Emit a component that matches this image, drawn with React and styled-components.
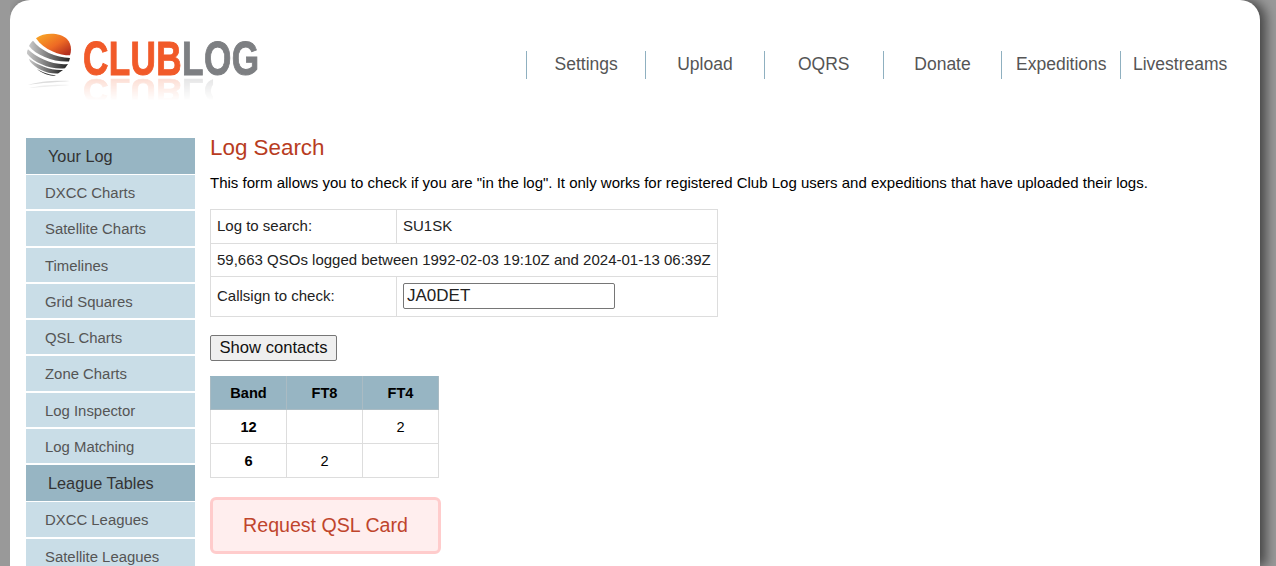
import React from "react";
import styled, { createGlobalStyle } from "styled-components";

const GlobalStyle = createGlobalStyle`
  html, body {
    margin: 0;
    padding: 0;
    height: 566px;
    overflow: hidden;
    background: #999999;
    font-family: "Liberation Sans", Arial, sans-serif;
  }
`;

const Page = styled.div`
  width: 1250px;
  height: 566px;
  margin-left: 10px;
  background: #fff;
  border-radius: 20px 20px 0 0;
  box-shadow: 6px 0 12px rgba(0, 0, 0, 0.55);
  overflow: hidden;
  clip-path: inset(0 -30px 0 0);
`;

const Header = styled.header`
  height: 138px;
  display: flex;
  justify-content: space-between;
  align-items: flex-start;
  padding: 0 21px 0 16px;
`;

const LogoBox = styled.div`
  display: flex;
  align-items: flex-start;
  margin-top: 33px;
  height: 70px;
`;

const LogoWords = styled.div`
  margin-left: 11px;
  margin-top: 9px;
  width: 176px;
  height: 60px;
`;

const LogoText = styled.div`
  font-weight: 700;
  font-size: 47.5px;
  line-height: 34px;
  height: 34px;
  letter-spacing: 0.5px;
  white-space: nowrap;
  -webkit-text-stroke: 1px currentColor;
  transform-origin: 0 50%;
  transform: scale(0.74, 1);
`;

const LogoMirror = styled(LogoText)`
  transform: scale(0.74, -0.7);
  opacity: 0.18;
  margin-top: -3px;
  -webkit-mask-image: linear-gradient(to top, #000 10%, transparent 95%);
  mask-image: linear-gradient(to top, #000 10%, transparent 95%);
`;

const Orange = styled.span`
  color: #f15a29;
`;

const Grey = styled.span`
  color: #7d7f82;
`;

const Nav = styled.nav`
  display: flex;
  margin-top: 51px;
`;

const NavItem = styled.a`
  width: 118.8px;
  height: 28px;
  padding-bottom: 2px;
  box-sizing: border-box;
  border-left: 1px solid #8fb0c0;
  display: flex;
  align-items: center;
  justify-content: center;
  font-size: 17.5px;
  color: #555;
`;

const Body = styled.div`
  display: flex;
  padding: 0 16px;
  gap: 15px;
`;

const Sidebar = styled.aside`
  width: 169px;
  flex: none;
`;

const SideHead = styled.div`
  height: 36px;
  line-height: 36px;
  margin-bottom: 1px;
  padding-left: 22px;
  background: #97b5c3;
  color: #333;
  font-size: 16.3px;
`;

const SideItem = styled.a`
  display: block;
  height: 34.3px;
  line-height: 36px;
  margin-bottom: 2px;
  padding-left: 19px;
  background: #c9dde7;
  color: #555;
  font-size: 14.9px;
`;

const Main = styled.main`
  flex: 1;
  color: #000;
`;

const Title = styled.h1`
  margin: 0;
  font-size: 22.4px;
  line-height: 20px;
  font-weight: 400;
  color: #b83c1e;
`;

const Intro = styled.p`
  margin: 16px 0 17px;
  font-size: 15px;
  line-height: 18px;
`;

const InfoTable = styled.table`
  border-collapse: collapse;
  width: 508px;
  font-size: 15px;
  color: #222;

  td {
    border: 1px solid #ddd;
    padding: 0 6px 2px;
    height: 31px;
  }
`;

const LabelCell = styled.td`
  width: 173px;
`;

const WideCell = styled.td`
  && {
    height: 30px;
  }
`;

const CallInput = styled.input`
  width: 212px;
  height: 26px;
  box-sizing: border-box;
  margin: 6px 0 5px;
  display: block;
  padding: 0 4px 0 3px;
  border: 1px solid #767676;
  border-radius: 2px;
  font: 17px "Liberation Sans", sans-serif;
  color: #222;
`;

const ShowButton = styled.button`
  display: block;
  margin: 18px 0 15px;
  width: 127px;
  height: 26px;
  padding: 0;
  background: #efefef;
  border: 1px solid #767676;
  border-radius: 2px;
  font: 16.6px "Liberation Sans", sans-serif;
  color: #111;
`;

const BandTable = styled.table`
  border-collapse: collapse;
  width: 229px;
  table-layout: fixed;
  font-size: 14.6px;
  text-align: center;

  th {
    background: #97b5c3;
    border: 1px solid #aabbc3;
    border-top-color: #97b5c3;
    height: 32px;
    padding: 0;
    font-weight: 700;
  }

  td {
    border: 1px solid #ddd;
    height: 33px;
    padding: 0;
  }
`;

const BandCell = styled.td`
  font-weight: 700;
`;

const QslButton = styled.a`
  display: flex;
  align-items: center;
  justify-content: center;
  box-sizing: border-box;
  width: 231px;
  height: 57px;
  margin-top: 19px;
  background: #ffeeee;
  border: 3px solid #ffcccc;
  border-radius: 6px;
  color: #c0452c;
  font-size: 19.6px;
`;

const navLinks = ["Settings", "Upload", "OQRS", "Donate", "Expeditions", "Livestreams"];

const sideMenu = [
  { head: "Your Log" },
  "DXCC Charts",
  "Satellite Charts",
  "Timelines",
  "Grid Squares",
  "QSL Charts",
  "Zone Charts",
  "Log Inspector",
  "Log Matching",
  { head: "League Tables" },
  "DXCC Leagues",
  "Satellite Leagues",
];

const bands = [
  { band: "12", ft8: "", ft4: "2" },
  { band: "6", ft8: "2", ft4: "" },
];

function Sphere() {
  return (
    <svg width="46" height="58" viewBox="0 0 46 58">
      <defs>
        <linearGradient id="ball" x1="0.1" y1="0.1" x2="0.9" y2="0.9">
          <stop offset="0" stopColor="#f7a126" />
          <stop offset="0.55" stopColor="#ee6a24" />
          <stop offset="1" stopColor="#b5301f" />
        </linearGradient>
        <linearGradient id="band" x1="0" y1="0" x2="1" y2="0">
          <stop offset="0" stopColor="#c9c9c9" />
          <stop offset="0.5" stopColor="#777" />
          <stop offset="1" stopColor="#222" />
        </linearGradient>
      </defs>
      <g transform="scale(1 0.86)">
        <path d="M10 6 C18 -1 34 -1 41 7 C45 12 46 19 44 26 C34 26 18 20 10 6 Z" fill="url(#ball)" />
        <path d="M7 9 C14 20 30 29 44 29 L43 33 C28 34 10 26 3 15 C4 13 5 11 7 9 Z" fill="url(#band)" />
        <path d="M2 19 C10 29 28 38 42 36 L39 41 C26 43 8 35 1 24 C1 22 1 21 2 19 Z" fill="url(#band)" />
        <path d="M3 30 C12 38 26 44 37 43 L32 47 C22 48 9 41 4 33 Z" fill="url(#band)" />
        <path d="M11 42 C18 47 24 49 30 49 C25 51 17 48 11 42 Z" fill="#333" />
      </g>
      <path d="M2 52 C12 48 32 47 44 48 C32 49 14 50 2 52 Z" fill="#ddd" />
      <path d="M3 55 C14 52 32 51 44 52 C32 53 16 54 3 55 Z" fill="#eee" />
    </svg>
  );
}

function Logo() {
  return (
    <LogoBox>
      <Sphere />
      <LogoWords>
        <LogoText><Orange>CLUB</Orange><Grey>LOG</Grey></LogoText>
        <LogoMirror aria-hidden="true"><Orange>CLUB</Orange><Grey>LOG</Grey></LogoMirror>
      </LogoWords>
    </LogoBox>
  );
}

export default function App() {
  return (
    <>
      <GlobalStyle />
      <Page>
        <Header>
          <Logo />
          <Nav>
            {navLinks.map(link => <NavItem key={link}>{link}</NavItem>)}
          </Nav>
        </Header>
        <Body>
          <Sidebar>
            {sideMenu.map(entry =>
              entry.head
                ? <SideHead key={entry.head}>{entry.head}</SideHead>
                : <SideItem key={entry}>{entry}</SideItem>
            )}
          </Sidebar>
          <Main>
            <Title>Log Search</Title>
            <Intro>This form allows you to check if you are "in the log". It only works for registered Club Log users and expeditions that have uploaded their logs.</Intro>
            <InfoTable>
              <tbody>
                <tr><LabelCell>Log to search:</LabelCell><td>SU1SK</td></tr>
                <tr><WideCell colSpan="2">59,663 QSOs logged between 1992-02-03 19:10Z and 2024-01-13 06:39Z</WideCell></tr>
                <tr><LabelCell>Callsign to check:</LabelCell><td><CallInput defaultValue="JA0DET" /></td></tr>
              </tbody>
            </InfoTable>
            <ShowButton>Show contacts</ShowButton>
            <BandTable>
              <thead>
                <tr><th>Band</th><th>FT8</th><th>FT4</th></tr>
              </thead>
              <tbody>
                {bands.map(row => (
                  <tr key={row.band}>
                    <BandCell>{row.band}</BandCell>
                    <td>{row.ft8}</td>
                    <td>{row.ft4}</td>
                  </tr>
                ))}
              </tbody>
            </BandTable>
            <QslButton>Request QSL Card</QslButton>
          </Main>
        </Body>
      </Page>
    </>
  );
}
